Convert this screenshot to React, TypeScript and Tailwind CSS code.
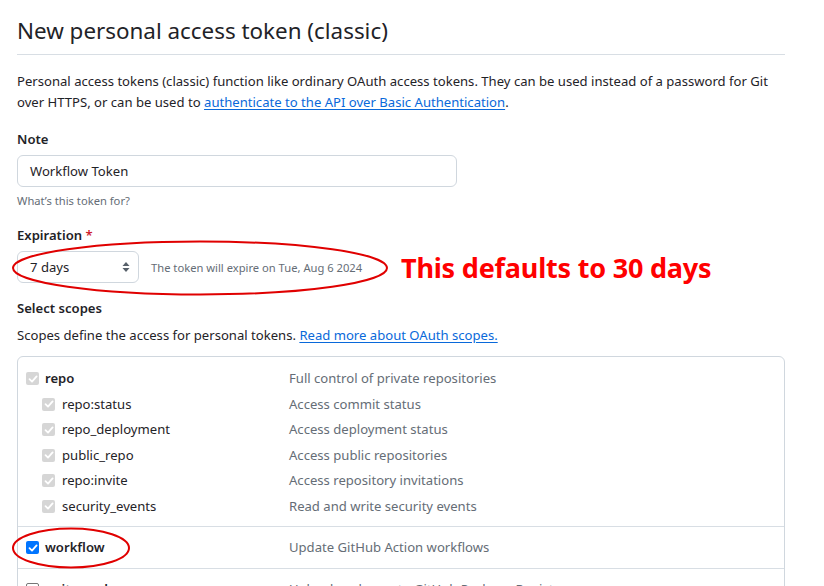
import React from "react";

type Scope = {
  name: string;
  desc: string;
  checked: boolean;
  disabled?: boolean;
  children?: { name: string; desc: string }[];
};

const scopes: Scope[] = [
  {
    name: "repo",
    desc: "Full control of private repositories",
    checked: true,
    disabled: true,
    children: [
      { name: "repo:status", desc: "Access commit status" },
      { name: "repo_deployment", desc: "Access deployment status" },
      { name: "public_repo", desc: "Access public repositories" },
      { name: "repo:invite", desc: "Access repository invitations" },
      { name: "security_events", desc: "Read and write security events" },
    ],
  },
  { name: "workflow", desc: "Update GitHub Action workflows", checked: true },
  { name: "write:packages", desc: "Upload packages to GitHub Package Registry", checked: false },
];

const Check = ({ state }: { state: "disabled" | "on" | "off" }) => {
  if (state === "off") {
    return <span className="block w-[13px] h-[13px] shrink-0 rounded-[2px] border border-[#767676] bg-white" />;
  }
  return (
    <span
      className={`flex items-center justify-center w-[13px] h-[13px] shrink-0 rounded-[2px] ${
        state === "on" ? "bg-[#0075ff]" : "bg-[#d6d6d6]"
      }`}
    >
      <svg width="10" height="10" viewBox="0 0 10 10" fill="none">
        <path d="M1.5 5.2 4 7.6 8.6 2.4" stroke="white" strokeWidth="1.8" strokeLinecap="round" strokeLinejoin="round" />
      </svg>
    </span>
  );
};

const App: React.FC = () => {
  return (
    <div className="h-[586px] overflow-hidden bg-white text-[#1f2328] font-['Noto_Sans',sans-serif] text-[13.1px] leading-[21px]">
      <div className="relative pl-[17px] w-[785px]">
        <h1 className="pt-4 pb-2 text-[22.4px] leading-[30px] font-normal border-b border-[#d8dee4]">
          New personal access token (classic)
        </h1>

        <p className="mt-4">
          Personal access tokens (classic) function like ordinary OAuth access tokens. They can be used instead of a password for Git
          over HTTPS, or can be used to{" "}
          <a className="text-[#0969da] underline underline-offset-2">authenticate to the API over Basic Authentication</a>.
        </p>

        <div className="mt-4 font-semibold">Note</div>
        <div className="mt-[5px] w-[440px] h-8 rounded-md border border-[#d0d7de] flex items-center px-3">
          Workflow Token
        </div>
        <div className="mt-[5px] text-[11.2px] leading-[18px] text-[#656d76]">What’s this token for?</div>

        <div className="mt-[15px] font-semibold">
          Expiration <span className="text-[#cf222e]">*</span>
        </div>
        <div className="relative mt-[5px] flex items-center">
          <div className="w-[122px] h-8 rounded-md border border-[#d0d7de] flex items-center justify-between pl-3 pr-2">
            <span>7 days</span>
            <svg width="8" height="12" viewBox="0 0 8 12" fill="#57606a">
              <path d="M4 1 7.5 5H.5z" />
              <path d="M4 11 .5 7h7z" />
            </svg>
          </div>
          <span className="ml-3 w-[216px] text-[11.2px] text-[#656d76] whitespace-nowrap">The token will expire on Tue, Aug 6 2024</span>
          <span className="ml-[34px] text-[27px] font-bold text-[#ff0000] tracking-[-0.2px] whitespace-nowrap">This defaults to 30 days</span>
          <svg className="absolute left-[-6px] top-[-12px] pointer-events-none" width="380" height="58" viewBox="0 0 380 58">
            <ellipse cx="189" cy="29" rx="187" ry="26.5" fill="none" stroke="#e00000" strokeWidth="2" />
          </svg>
        </div>

        <div className="mt-[15px] font-semibold">Select scopes</div>
        <p className="mt-[6px]">
          Scopes define the access for personal tokens.{" "}
          <a className="text-[#0969da] underline underline-offset-2">Read more about OAuth scopes.</a>
        </p>

        <div className="mt-[10px] rounded-md border border-[#d0d7de]">
          {scopes.map((s, i) => (
            <div key={s.name} className={`${i > 0 ? "border-t border-[#d8dee4]" : ""} ${s.children ? "pt-[9px] pb-[7px]" : "py-[10px]"}`}>
              <div className={`relative flex items-center pl-[8px] ${s.children ? "h-[25.5px]" : "h-[21px]"}`}>
                <div className="flex items-center w-[263px] gap-[6px]">
                  <Check state={s.disabled ? "disabled" : s.checked ? "on" : "off"} />
                  <span className="font-semibold">{s.name}</span>
                </div>
                <span className="text-[#656d76]">{s.desc}</span>
                {s.name === "workflow" && (
                  <svg className="absolute left-[-7px] top-[-10px] pointer-events-none" width="120" height="42" viewBox="0 0 120 42">
                    <ellipse cx="60" cy="21" rx="58" ry="19.5" fill="none" stroke="#e00000" strokeWidth="2" />
                  </svg>
                )}
              </div>
              {s.children?.map((c) => (
                <div key={c.name} className="flex items-center h-[25.5px] pl-[24px]">
                  <div className="flex items-center w-[247px] gap-[7px]">
                    <Check state="disabled" />
                    <span>{c.name}</span>
                  </div>
                  <span className="text-[#656d76]">{c.desc}</span>
                </div>
              ))}
            </div>
          ))}
        </div>
      </div>
    </div>
  );
};

export default App;
